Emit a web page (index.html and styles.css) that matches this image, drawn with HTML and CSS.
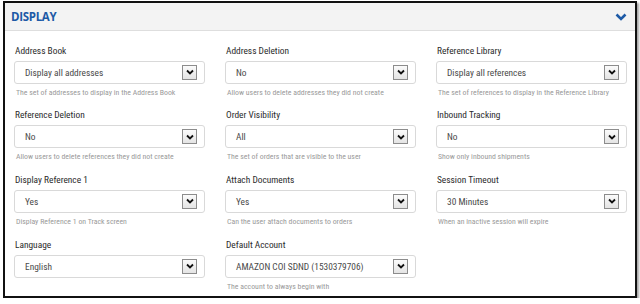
FILE: index.html
```html
<!DOCTYPE html>
<html lang="en">
<head>
  <meta charset="UTF-8" />
  <title>Display Settings</title>
  <link rel="stylesheet" href="styles.css">
</head>
<body>
  <div class="panel">
    <div class="panel-head">
      <span class="panel-title">DISPLAY</span>
      <svg class="collapse" viewBox="0 0 12 8"><polyline points="1.5,1.5 6,6 10.5,1.5" fill="none" stroke="currentColor" stroke-width="2.6" /></svg>
    </div>
    <div class="fields">
      <div class="field">
        <label>Address Book</label>
        <div class="select"><span>Display all addresses</span><i class="arrow"><svg viewBox="0 0 10 8"><polyline points="2,2.5 5,5.5 8,2.5" /></svg></i></div>
        <p class="help">The set of addresses to display in the Address Book</p>
      </div>
      <div class="field">
        <label>Address Deletion</label>
        <div class="select"><span>No</span><i class="arrow"><svg viewBox="0 0 10 8"><polyline points="2,2.5 5,5.5 8,2.5" /></svg></i></div>
        <p class="help">Allow users to delete addresses they did not create</p>
      </div>
      <div class="field">
        <label>Reference Library</label>
        <div class="select"><span>Display all references</span><i class="arrow"><svg viewBox="0 0 10 8"><polyline points="2,2.5 5,5.5 8,2.5" /></svg></i></div>
        <p class="help">The set of references to display in the Reference Library</p>
      </div>
      <div class="field">
        <label>Reference Deletion</label>
        <div class="select"><span>No</span><i class="arrow"><svg viewBox="0 0 10 8"><polyline points="2,2.5 5,5.5 8,2.5" /></svg></i></div>
        <p class="help">Allow users to delete references they did not create</p>
      </div>
      <div class="field">
        <label>Order Visibility</label>
        <div class="select"><span>All</span><i class="arrow"><svg viewBox="0 0 10 8"><polyline points="2,2.5 5,5.5 8,2.5" /></svg></i></div>
        <p class="help">The set of orders that are visible to the user</p>
      </div>
      <div class="field">
        <label>Inbound Tracking</label>
        <div class="select"><span>No</span><i class="arrow"><svg viewBox="0 0 10 8"><polyline points="2,2.5 5,5.5 8,2.5" /></svg></i></div>
        <p class="help">Show only inbound shipments</p>
      </div>
      <div class="field">
        <label>Display Reference 1</label>
        <div class="select"><span>Yes</span><i class="arrow"><svg viewBox="0 0 10 8"><polyline points="2,2.5 5,5.5 8,2.5" /></svg></i></div>
        <p class="help">Display Reference 1 on Track screen</p>
      </div>
      <div class="field">
        <label>Attach Documents</label>
        <div class="select"><span>Yes</span><i class="arrow"><svg viewBox="0 0 10 8"><polyline points="2,2.5 5,5.5 8,2.5" /></svg></i></div>
        <p class="help">Can the user attach documents to orders</p>
      </div>
      <div class="field">
        <label>Session Timeout</label>
        <div class="select"><span>30 Minutes</span><i class="arrow"><svg viewBox="0 0 10 8"><polyline points="2,2.5 5,5.5 8,2.5" /></svg></i></div>
        <p class="help">When an inactive session will expire</p>
      </div>
      <div class="field">
        <label>Language</label>
        <div class="select"><span>English</span><i class="arrow"><svg viewBox="0 0 10 8"><polyline points="2,2.5 5,5.5 8,2.5" /></svg></i></div>
      </div>
      <div class="field">
        <label>Default Account</label>
        <div class="select"><span>AMAZON COI SDND (1530379706)</span><i class="arrow"><svg viewBox="0 0 10 8"><polyline points="2,2.5 5,5.5 8,2.5" /></svg></i></div>
        <p class="help">The account to always begin with</p>
      </div>
    </div>
  </div>
</body>
</html>
```

FILE: styles.css
```css
* { box-sizing: border-box; margin: 0; padding: 0; }
body {
  font-family: "Liberation Sans Narrow", "Roboto Condensed", "Liberation Sans", sans-serif;
  background: #fff;
  padding: 1px 0 0 3px;
}
.panel {
  width: 634px; height: 297px;
  border: 2px solid #111;
  background: #fff;
  box-shadow: 2px 2px 2px rgba(0, 0, 0, 0.35);
}
.panel-head {
  height: 28px;
  background: #f3f3f3;
  border-bottom: 1px solid #dedede;
  display: flex; align-items: center; justify-content: space-between;
  padding: 0 8px 0 6px;
}
.panel-title { font-family: "Open Sans", sans-serif; font-weight: 700; font-size: 11.5px; letter-spacing: -0.3px; color: #1d5aa6; }
.collapse { width: 12px; height: 8px; color: #1d5aa6; }
.fields {
  display: grid;
  grid-template-columns: repeat(3, 191px);
  column-gap: 20px; row-gap: 9.7px;
  padding: 12.5px 0 0 9px;
}
.field label { display: block; font-size: 9.4px; line-height: 14px; color: #2b2b2b; padding-left: 1px; }
.select {
  margin-top: 3px; height: 23px;
  border: 1px solid #d9d9d9; border-radius: 3px;
  display: flex; align-items: center; justify-content: space-between;
  padding: 0 7px 0 10px;
  font-size: 9.4px; color: #4a4a4a;
}
.arrow {
  width: 15px; height: 15px;
  border: 1px solid #8c8c8c;
  background: linear-gradient(#fbfbfb, #e4e4e4);
  display: flex; align-items: center; justify-content: center;
}
.arrow svg { width: 10px; height: 8px; fill: none; stroke: #111; stroke-width: 1.8; }
.help { margin-top: 3px; font-size: 7.8px; line-height: 12px; color: #9a9a9a; padding-left: 2px; }
```
